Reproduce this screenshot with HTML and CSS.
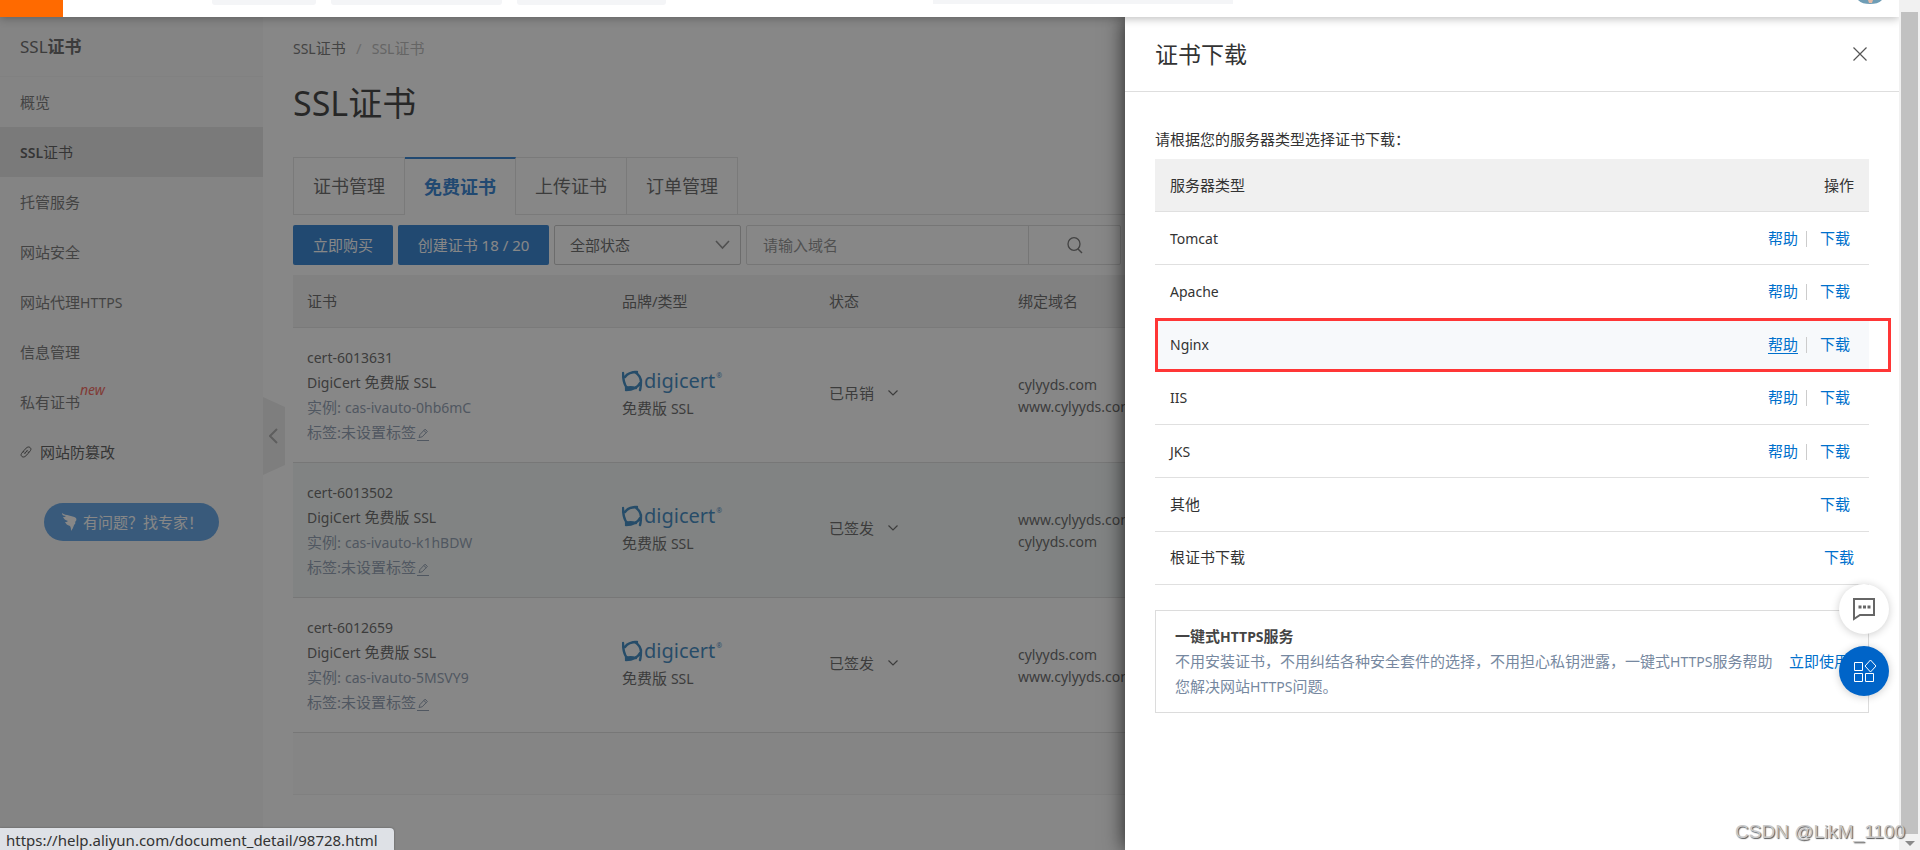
FILE: index.html
```html
<!DOCTYPE html>
<html lang="zh-CN">
<head>
<meta charset="utf-8">
<title>SSL证书</title>
<link rel="stylesheet" href="styles.css">
</head>
<body>
<svg width="0" height="0" class="defs" aria-hidden="true">
  <symbol id="edit" viewBox="0 0 12 14"><path d="M2 10.500 3 7.500 8 2.200 10.400 4.400 5.200 9.800 2 10.500M6.800 3.500 9.200 5.700M0 13.500h12" fill="none" stroke="currentColor"/></symbol>
  <symbol id="caret" viewBox="0 0 10 6"><path d="M.5.5 5 5 9.500.5" fill="none" stroke="currentColor" stroke-width="1.200"/></symbol>
  <symbol id="ring" viewBox="0 0 21 22"><path d="M1 3C1 8 1 13 5 18M3 7c2-3 6-5 12-5M13 2c3 2 6 5 6 10M19 10c0 4 0 7-1 10M18 13c-2 4-7 7-14 7M4 18c3-1 6-1 10 0" fill="none" stroke="currentColor" stroke-width="2.400" stroke-linecap="round"/></symbol>
</svg>

<div class="viewport">
  <header class="topbar">
    <div class="brand"></div>
    <div class="chip chip-a"></div>
    <div class="chip chip-b"></div>
    <div class="chip chip-c"></div>
    <div class="searchbar"></div>
    <svg class="avatar" width="24" height="4" viewBox="0 0 24 4"><path d="M0 0h24c-3 3-7 4-12 4S3 3 0 0z" fill="#6f9db5"/><path d="M10 0h5l-1 3h-3z" fill="#e3b9a5"/></svg>
  </header>

  <div class="shell">
    <nav class="sidebar">
      <h2 class="side-title"><span class="thin">SSL</span>证书</h2>
      <ul class="side-list">
        <li><a href="#">概览</a></li>
        <li><a href="#" class="current">SSL<span class="thin">证书</span></a></li>
        <li><a href="#">托管服务</a></li>
        <li><a href="#">网站安全</a></li>
        <li><a href="#">网站代理<span class="en">HTTPS</span></a></li>
        <li><a href="#">信息管理</a></li>
        <li><a href="#">私有证书<em class="new">new</em></a></li>
        <li><a href="#" class="ext"><svg width="12" height="14" viewBox="0 0 12 14"><path d="M4 7.500c-1-1.500 0-2.500 3-5 2-1.500 5 .5 3.500 3L8.500 8M8 6.500c1 1.500 0 2.500-3 5-2 1.500-5-.5-3.500-3L3.500 6M4.500 9 7.500 5" fill="none" stroke="currentColor"/></svg>网站防篡改</a></li>
      </ul>
      <button class="expert" type="button"><svg width="16" height="20" viewBox="0 0 16 20"><path d="M1 1c4 3 10 2 14 5 1 2 0 3-1 4 1 1 0 2-1 3 0 1-1 2-1 3l-2 3c0-2 0-3-1-5-3-1-4-2-5-4 1 0 2 0 3-1-3-1-4-2-5-4 1 0 2 0 3-1C2 4 1 3 1 1z" fill="#fff"/></svg>有问题？找专家！</button>
    </nav>
    <button class="collapse" type="button" aria-label="收起"><svg width="9" height="16" viewBox="0 0 9 16"><path d="M8 1 1 8l7 7" fill="none" stroke="#999" stroke-width="2"/></svg></button>

    <main class="content">
      <div class="crumbs"><a href="#"><span class="en">SSL</span>证书</a><span class="slash">/</span><span class="here"><span class="en">SSL</span>证书</span></div>
      <h1>SSL证书</h1>
      <div class="tabs">
        <button type="button">证书管理</button><button type="button" class="on">免费证书</button><button type="button">上传证书</button><button type="button">订单管理</button>
      </div>
      <div class="toolbar">
        <button type="button" class="primary">立即购买</button>
        <button type="button" class="primary wide">创建证书 18 / 20</button>
        <div class="select"><select aria-label="状态"><option>全部状态</option></select><svg width="15" height="10" viewBox="0 0 15 10"><path d="M1 1l6.500 7L14 1" fill="none" stroke="#777" stroke-width="1.600"/></svg></div>
        <div class="search"><input type="text" placeholder="请输入域名" aria-label="请输入域名"><button type="button" aria-label="搜索"><svg width="16" height="17" viewBox="0 0 16 17"><ellipse cx="7" cy="7" rx="6" ry="6.300" fill="none" stroke="#555" stroke-width="1.300"/><path d="M11 12l4 4" stroke="#555" stroke-width="1.400"/></svg></button></div>
      </div>

      <table class="certs">
        <colgroup><col class="c1"><col class="c2"><col class="c3"><col></colgroup>
        <thead><tr><th>证书</th><th>品牌/类型</th><th>状态</th><th>绑定域名</th></tr></thead>
        <tbody>
          <tr>
            <td><div class="en">cert-6013631</div><div><span class="en">DigiCert</span> 免费版 <span class="en">SSL</span></div><div class="muted">实例: <span class="en">cas-ivauto-0hb6mC</span></div><div class="muted">标签:未设置标签<svg width="12" height="14"><use href="#edit"/></svg></div></td>
            <td class="brandcell"><div class="logo"><svg width="21" height="22"><use href="#ring"/></svg>digicert<sup>®</sup></div><div>免费版 <span class="en">SSL</span></div></td>
            <td class="state">已吊销<svg class="caret" width="10" height="6"><use href="#caret"/></svg></td>
            <td class="domains"><div>cylyyds.com</div><div>www.cylyyds.com</div></td>
          </tr>
          <tr class="tint">
            <td><div class="en">cert-6013502</div><div><span class="en">DigiCert</span> 免费版 <span class="en">SSL</span></div><div class="muted">实例: <span class="en">cas-ivauto-k1hBDW</span></div><div class="muted">标签:未设置标签<svg width="12" height="14"><use href="#edit"/></svg></div></td>
            <td class="brandcell"><div class="logo"><svg width="21" height="22"><use href="#ring"/></svg>digicert<sup>®</sup></div><div>免费版 <span class="en">SSL</span></div></td>
            <td class="state">已签发<svg class="caret" width="10" height="6"><use href="#caret"/></svg></td>
            <td class="domains"><div>www.cylyyds.com</div><div>cylyyds.com</div></td>
          </tr>
          <tr>
            <td><div class="en">cert-6012659</div><div><span class="en">DigiCert</span> 免费版 <span class="en">SSL</span></div><div class="muted">实例: <span class="en">cas-ivauto-5MSVY9</span></div><div class="muted">标签:未设置标签<svg width="12" height="14"><use href="#edit"/></svg></div></td>
            <td class="brandcell"><div class="logo"><svg width="21" height="22"><use href="#ring"/></svg>digicert<sup>®</sup></div><div>免费版 <span class="en">SSL</span></div></td>
            <td class="state">已签发<svg class="caret" width="10" height="6"><use href="#caret"/></svg></td>
            <td class="domains"><div>cylyyds.com</div><div>www.cylyyds.com</div></td>
          </tr>
        </tbody>
      </table>
      <div class="table-foot"></div>
    </main>
  </div>

  <div class="mask"></div>

  <aside class="drawer">
    <div class="drawer-head"><h2>证书下载</h2><button type="button" aria-label="关闭"><svg width="14" height="14" viewBox="0 0 14 14"><path d="M.5.5l13 13M13.500.5l-13 13" stroke="#555" stroke-width="1.200"/></svg></button></div>
    <div class="drawer-body">
      <p class="hint">请根据您的服务器类型选择证书下载：</p>
      <table class="servers">
        <thead><tr><th>服务器类型</th><th class="ops">操作</th></tr></thead>
        <tbody>
          <tr><td class="en">Tomcat</td><td class="ops"><a href="#">帮助</a><i class="bar"></i><a href="#" class="dl">下载</a></td></tr>
          <tr><td class="en">Apache</td><td class="ops"><a href="#">帮助</a><i class="bar"></i><a href="#" class="dl">下载</a></td></tr>
          <tr class="hover"><td class="en">Nginx<span class="marker"></span></td><td class="ops"><a href="#" class="under">帮助</a><i class="bar"></i><a href="#" class="dl">下载</a></td></tr>
          <tr><td class="en">IIS</td><td class="ops"><a href="#">帮助</a><i class="bar"></i><a href="#" class="dl">下载</a></td></tr>
          <tr><td class="en">JKS</td><td class="ops"><a href="#">帮助</a><i class="bar"></i><a href="#" class="dl">下载</a></td></tr>
          <tr><td>其他</td><td class="ops"><a href="#" class="dl">下载</a></td></tr>
          <tr><td>根证书下载</td><td class="ops"><a href="#">下载</a></td></tr>
        </tbody>
      </table>
      <section class="card">
        <h3>一键式<span class="en">HTTPS</span>服务</h3>
        <div class="card-row"><p>不用安装证书，不用纠结各种安全套件的选择，不用担心私钥泄露，一键式<span class="en">HTTPS</span>服务帮助您解决网站<span class="en">HTTPS</span>问题。</p><a href="#">立即使用</a></div>
      </section>
    </div>
  </aside>

  <div class="fabs">
    <button type="button" aria-label="咨询"><svg width="24" height="24" viewBox="0 0 24 24"><path d="M2 2h20v16H8l-6 4z" fill="none" stroke="#666" stroke-width="2"/><path d="M6.500 8.500h3v3h-3zM11 8.500h3v3h-3zM15.500 8.500h3v3h-3z" fill="#666"/></svg></button>
    <button type="button" class="blue" aria-label="应用"><svg width="24" height="24" viewBox="0 0 24 24"><path d="M2.500 3.500h8v8h-8zM2.500 14.500h8v8h-8zM13.500 14.500h8v8h-8zM18.500 1l5.500 6-5.500 6-5.500-6z" fill="none" stroke="#fff" stroke-width="1"/></svg></button>
  </div>
  <div class="status">https://help.aliyun.com/document_detail/98728.html</div>
</div>

<div class="scrollbar"><div class="thumb"></div><svg width="10" height="5" viewBox="0 0 10 5"><path d="M0 0h10L5 5z" fill="#8a8a8a"/></svg></div>
<div class="watermark">CSDN @LikM_1100</div>
</body>
</html>
```
FILE: styles.css
```css
* { box-sizing: border-box; }
body {
  margin: 0;
  height: 100vh;
  display: flex;
  overflow: hidden;
  font: 15px/25px "Noto Sans", "Noto Sans CJK SC", sans-serif;
  color: #333;
}
h1, h2, h3, p, ul { margin: 0; padding: 0; font-weight: 400; }
button, input, select { font: inherit; color: inherit; border: 0; margin: 0; padding: 0; background: none; }
a { color: #0070cc; text-decoration: none; }
svg { flex: none; }
.defs { position: absolute; }
.en { font-size: 14px; }
.thin { font-weight: 400; }

.viewport { flex: 1; position: relative; display: flex; flex-direction: column; overflow: hidden; background: #fff; }

.topbar {
  position: relative;
  z-index: 3;
  flex: none;
  height: 17px;
  display: flex;
  align-items: flex-start;
  background: #fff;
  box-shadow: 0 2px 8px rgba(0, 0, 0, .25);
}
.brand { width: 63px; height: 17px; margin-right: 149px; background: #ff6a00; }
.chip { height: 5px; margin-right: 15px; border-radius: 0 0 3px 3px; background: #f4f5f7; }
.chip-a { width: 104px; }
.chip-b { width: 171px; }
.chip-c { width: 149px; }
.searchbar { width: 300px; height: 4px; margin-left: auto; background: #f4f5f7; }
.avatar { margin: 0 17px 0 625px; }

.shell { flex: 1; display: flex; min-height: 0; }
.sidebar { flex: none; width: 263px; background: #f7f7f7; color: #555; }
.side-title { height: 60px; padding-left: 20px; border-bottom: 1px solid #f0f0f0; font-size: 17px; line-height: 59px; font-weight: 700; color: #444; }
.side-list { list-style: none; }
.side-list a { display: flex; align-items: center; height: 50px; padding-left: 20px; color: #555; }
.side-list .current { background: #dedede; font-size: 14px; font-weight: 600; color: #333; }
.side-list .current .thin { font-size: 15px; }
.new { align-self: flex-start; color: #f04134; font-size: 14px; }
.side-list .ext { gap: 8px; color: #333; }
.expert {
  display: flex;
  align-items: center;
  gap: 6px;
  width: 175px;
  height: 38px;
  margin: 26px 0 0 44px;
  padding-left: 17px;
  border-radius: 19px;
  background: #3d8fe0;
  color: #fff;
  white-space: nowrap;
}
.collapse {
  flex: none;
  align-self: flex-start;
  width: 22px;
  height: 78px;
  margin-top: 380px;
  padding-right: 2px;
  display: flex;
  align-items: center;
  justify-content: center;
  background: #e9e9e9;
  clip-path: polygon(0 0, 100% 10px, 100% 68px, 0 100%);
}

.content { flex: 1; min-width: 0; padding: 19px 30px 0 8px; }
.crumbs { display: flex; }
.crumbs a { color: #555; }
.crumbs .slash { width: 26px; text-align: center; color: #bbb; }
.crumbs .here { color: #aaa; }
h1 { margin-top: 17px; font-size: 34px; line-height: 50px; color: #111; }
.tabs { display: flex; margin-top: 29px; border-bottom: 1px solid #dedede; }
.tabs button { height: 57px; padding: 0 19px; border: 1px solid #dedede; border-width: 1px 1px 0 0; font-size: 18px; color: #444; }
.tabs button:first-child { border-left-width: 1px; }
.tabs .on { height: 58px; border-top: 2px solid #0064c8; margin-bottom: -1px; background: #fff; color: #0064c8; font-weight: 700; }
.toolbar { display: flex; gap: 5px; margin-top: 10px; }
.toolbar > * { height: 40px; border-radius: 2px; }
.primary { width: 100px; background: #0064c8; color: #fff; }
.wide { width: 151px; }
.select { width: 187px; display: flex; align-items: center; border: 1px solid #bbb; padding-right: 10px; }
.select select { flex: 1; appearance: none; height: 38px; padding-left: 15px; outline: 0; color: #444; }
.search { width: 375px; display: flex; border: 1px solid #d5d5d5; }
.search input { flex: 1; min-width: 0; padding-left: 16px; }
.search input::placeholder { color: #777; opacity: 1; }
.search button { width: 92px; display: flex; align-items: center; justify-content: center; border-left: 1px solid #d5d5d5; }

table { width: 100%; border-collapse: separate; border-spacing: 0; }
th { font-weight: 400; text-align: left; }
.certs { table-layout: fixed; margin-top: 10px; color: #444; }
.c1 { width: 315px; }
.c2 { width: 207px; }
.c3 { width: 189px; }
.certs th { height: 53px; padding: 0 14px; border-bottom: 1px solid #dedede; background: #f0f0f0; }
.certs td { height: 135px; padding: 0 14px; border-bottom: 1px solid #d8d8d8; }
.tint { background: #f1f6f4; }
.muted { color: #7688a0; }
.muted svg { vertical-align: -3px; margin-left: 1px; }
.certs .brandcell { padding-bottom: 2px; }
.certs .state { padding-bottom: 4px; }
.caret { margin-left: 14px; vertical-align: 3px; }
.certs .domains { padding-top: 2px; font-size: 14px; line-height: 22px; }
.logo { display: flex; align-items: center; gap: 1px; height: 28px; padding-bottom: 2px; font-size: 20px; color: #0d6db3; }
.logo sup { align-self: flex-start; font-size: 7px; line-height: 16px; }
.table-foot { height: 62px; border-bottom: 1px solid #eee; background: #f9f9f9; }

.mask { position: absolute; inset: 0; z-index: 1; background: rgba(55, 55, 55, .6); }

.drawer {
  position: absolute;
  z-index: 2;
  top: 17px;
  right: 0;
  bottom: 0;
  width: 774px;
  background: #fff;
  box-shadow: 0 0 20px rgba(0, 0, 0, .75);
}
.drawer-head { display: flex; align-items: center; justify-content: space-between; height: 75px; padding: 0 32px 0 30px; border-bottom: 1px solid #dedede; }
.drawer-head h2 { font-size: 23px; line-height: 36px; }
.drawer-head button { display: flex; }
.drawer-body { padding: 35px 30px 0; }
.hint { margin-bottom: 7px; }
.servers { height: 426px; }
.servers th, .servers td { height: 53px; padding: 0 15px; border-bottom: 1px solid #e0e0e0; }
.servers th { background: #f0f0f0; }
.servers .ops { text-align: right; }
.bar { display: inline-block; width: 1px; height: 16px; margin: 0 13px 0 8px; vertical-align: -3px; background: #ccc; }
.dl { margin-right: 4px; }
.under { text-decoration: underline; text-underline-offset: 3px; }
.hover { position: relative; background: #f7f9fb; }
.marker { position: absolute; inset: -1px -22px 0 0; border: 3px solid #ff3636; }
.card { margin-top: 25px; padding: 13px 19px; border: 1px solid #dcdcdc; }
.card h3 { font-size: 15px; font-weight: 700; color: #444; }
.card-row { display: flex; gap: 8px; align-items: flex-start; color: #7688a0; }
.card-row p { flex: 1; }
.card-row a { white-space: nowrap; }

.fabs { position: absolute; z-index: 4; top: 584px; right: 10px; display: grid; gap: 12px; }
.fabs button { width: 50px; height: 50px; display: flex; align-items: center; justify-content: center; border-radius: 50%; background: #fff; box-shadow: 0 1px 8px rgba(0, 0, 0, .2); }
.fabs .blue { background: #0064c8; }
.status { position: absolute; z-index: 4; left: 0; bottom: 0; height: 22px; padding: 0 16px 0 6px; border-top-right-radius: 4px; background: #dee1e6; color: #333; font-size: 15px; line-height: 25px; white-space: nowrap; box-shadow: 0 0 2px #555; }

.scrollbar { flex: none; width: 21px; display: flex; flex-direction: column; align-items: center; padding: 12px 0 4px; background: #f1f1f1; }
.scrollbar .thumb { flex: 1; width: 17px; margin-bottom: 7px; background: #c1c1c1; }
.watermark { position: absolute; right: 15px; bottom: 6px; z-index: 5; font: 19px/24px "Liberation Sans", sans-serif; color: #c8c8c8; text-shadow: 1px 1px 1px #555; }
```
